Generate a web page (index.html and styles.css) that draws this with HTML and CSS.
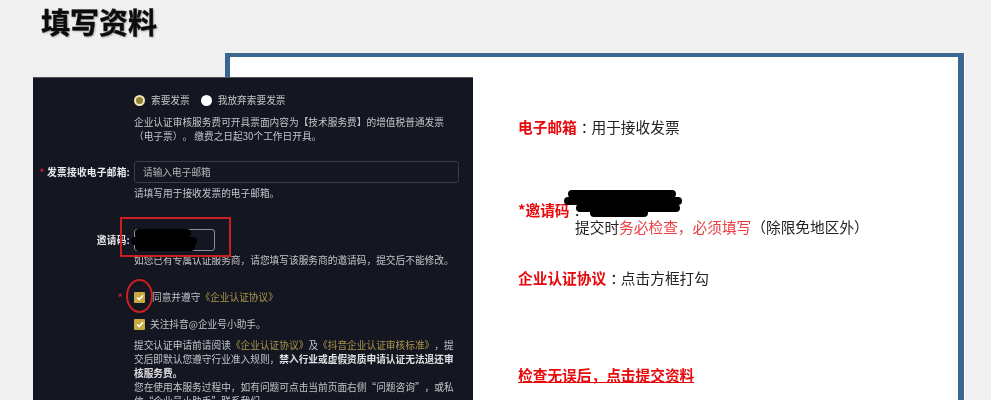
FILE: index.html
```html
<!DOCTYPE html>
<html lang="zh-CN">
<head>
<meta charset="utf-8">
<title>填写资料</title>
<link rel="stylesheet" href="styles.css">
</head>
<body>
<h1 class="title">填写资料</h1>
<main class="stage">
  <section class="frame">
    <p class="note note-email"><b class="red">电子邮箱</b><span class="colon">：</span>用于接收发票</p>
    <div class="note note-code">
      <p><b class="red">*邀请码</b><span class="colon">：</span></p>
      <p class="indent">提交时<span class="red-thin">务必检查，必须填写</span>（除限免地区外）</p>
      <svg class="scribble" width="120" height="30" viewBox="0 0 120 30"><path d="M8 4 H108 M4 11 H100 M8 11 H114 M16 18 H112 M30 23 H80" stroke="#000" stroke-width="8" stroke-linecap="round" fill="none"/></svg>
    </div>
    <p class="note note-agree"><b class="red">企业认证协议</b><span class="colon">：</span>点击方框打勾</p>
    <p class="note note-submit"><b class="red under">检查无误后，点击提交资料</b></p>
  </section>
  <section class="panel">
    <div class="row row-radio">
      <div class="field radios">
        <span class="radio on"></span><span class="opt">索要发票</span>
        <span class="radio"></span><span class="opt">我放弃索要发票</span>
      </div>
    </div>
    <div class="row row-intro">
      <p class="field text">企业认证审核服务费可开具票面内容为【技术服务费】的增值税普通发票（电子票）。 缴费之日起30个工作日开具。</p>
    </div>
    <div class="row row-mail">
      <label class="label"><i class="req">*</i> 发票接收电子邮箱:</label>
      <div class="field"><div class="input">请输入电子邮箱</div></div>
    </div>
    <div class="row row-hint">
      <p class="field text">请填写用于接收发票的电子邮箱。</p>
    </div>
    <div class="row row-code">
      <label class="label">邀请码:</label>
      <div class="field code-wrap">
        <div class="input short"></div>
        <span class="red-box"></span>
        <svg class="scribble-dark" width="70" height="24" viewBox="0 0 70 24"><path d="M8 5 H56 M4 13 H62 M8 19 H60" stroke="#000" stroke-width="8" stroke-linecap="round" fill="none"/></svg>
      </div>
    </div>
    <div class="row row-hint2">
      <p class="field text">如您已有专属认证服务商，请您填写该服务商的邀请码，提交后不能修改。</p>
    </div>
    <div class="row row-check1">
      <label class="label"><i class="req">*</i></label>
      <div class="field check-line agree">
        <span class="check"><svg width="8" height="7" viewBox="0 0 8 7"><path d="M1 3.5 L3.2 5.6 L7 1.2" stroke="#fff" stroke-width="1.6" fill="none"/></svg></span>
        <span>同意并遵守<em class="gold">《企业认证协议》</em></span>
        <span class="red-ring"></span>
      </div>
    </div>
    <div class="row row-check2">
      <div class="field check-line">
        <span class="check"><svg width="8" height="7" viewBox="0 0 8 7"><path d="M1 3.5 L3.2 5.6 L7 1.2" stroke="#fff" stroke-width="1.6" fill="none"/></svg></span>
        <span>关注抖音@企业号小助手。</span>
      </div>
    </div>
    <div class="row row-terms">
      <div class="field text">
        <p>提交认证申请前请阅读<em class="gold">《企业认证协议》</em>及<em class="gold">《抖音企业认证审核标准》</em>，提交后即默认您遵守行业准入规则，<b>禁入行业或虚假资质申请认证无法退还审核服务费。</b></p>
        <p>您在使用本服务过程中，如有问题可点击当前页面右侧“问题咨询”，或私信“企业号小助手”联系我们。</p>
      </div>
    </div>
  </section>
</main>
</body>
</html>
```
FILE: styles.css
```css
html, body {
  margin: 0;
  height: 400px;
  overflow: hidden;
  background: #f0f0f0;
  font-family: "Noto Sans CJK SC", "Liberation Sans", sans-serif;
  text-spacing-trim: space-all;
}
p { margin: 0; }
em, i { font-style: normal; }

.title {
  margin: 0;
  padding: 1px 0 0 41px;
  height: 50px;
  box-sizing: border-box;
  font-size: 29px;
  line-height: 40px;
  font-weight: 700;
  color: #0c0c0c;
  -webkit-text-stroke: .4px #0c0c0c;
  text-shadow: 1px 1px 2px rgba(0, 0, 0, .35);
  filter: blur(.3px);
}

.stage {
  display: grid;
  padding-top: 3px;
  height: 347px;
  overflow: hidden;
  filter: blur(.3px);
}
.frame, .panel { grid-area: 1 / 1; }

/* Blue-framed slide */
.frame {
  position: relative;
  margin-left: 225px;
  width: 739px;
  height: 347px;
  box-sizing: border-box;
  background: #fff;
  border: solid #396791;
  border-width: 4px 6px 0 5px;
  box-shadow: 1px 0 0 #fff;
  padding-left: 288px;
  font-size: 14.7px;
  line-height: 22px;
  color: #222;
}
.red { color: #e8080c; font-weight: 700; }
.red-thin { color: #ea3c43; }
.under { text-decoration: underline; }
.colon { display: inline-block; transform: translateX(4px); }
.note-email { padding-top: 59px; }
.note-code { position: relative; padding-top: 61px; }
.indent { margin-left: 57px; line-height: 14px; margin-top: -1px; white-space: nowrap; }
.note-agree { padding-top: 33px; }
.note-submit { padding-top: 75px; }
.scribble { position: absolute; left: 46px; top: 52px; }

/* Dark screenshot */
.panel {
  margin: 24px 0 0 33px;
  width: 440px;
  height: 323px;
  background: #141722;
  color: #c4c4c8;
  font-size: 9.7px;
  line-height: 14px;
  overflow: hidden;
  z-index: 1;
  border-top: 1px solid #555;
  box-sizing: border-box;
}
.row {
  display: grid;
  grid-template-columns: 101px 1fr;
  align-items: center;
}
.field { grid-column: 2; min-width: 0; }
.label {
  grid-column: 1;
  text-align: right;
  padding-right: 4px;
  color: #e8e8ea;
  font-weight: 700;
  font-size: 9.7px;
  letter-spacing: .25px;
  white-space: nowrap;
}
.req { color: #c8202c; }
.text { padding-right: 14px; }

.row-radio { padding-top: 15px; }
.radios { display: flex; align-items: center; }
.radio {
  width: 11px; height: 11px;
  border-radius: 50%;
  background: #fff;
  margin-right: 6px;
}
.radio.on {
  box-sizing: border-box;
  background: #8e8238;
  border: 2.5px solid #f3e9b4;
}
.opt { margin-right: 11px; }
.row-intro { padding-top: 8px; }
.row-mail { padding-top: 18px; }
.input {
  box-sizing: border-box;
  width: 325px;
  height: 22px;
  border: 1px solid #3a3e4a;
  border-radius: 3px;
  padding-left: 8px;
  line-height: 20px;
  color: #b5b5b8;
}
.input.short { width: 81px; border-color: #8e8f96; }
.row-hint { padding-top: 3px; }
.row-code { padding-top: 29px; }
.code-wrap { position: relative; }
.red-box {
  box-sizing: border-box;
  position: absolute;
  left: -14px; top: -12px;
  width: 111px; height: 40px;
  border: 2px solid #c9201f;
}
.scribble-dark { position: absolute; left: -3px; top: -1px; }
.row-hint2 { padding-top: 2px; }
.row-check1 { padding-top: 23px; }
.row-check1 .label { padding-right: 11px; box-sizing: border-box; }
.check-line { position: relative; display: flex; align-items: center; gap: 5px; }
.agree { gap: 7px; }
.check {
  display: flex;
  align-items: center;
  justify-content: center;
  width: 11px; height: 11px;
  background: #c8a93f;
  border-radius: 1px;
}
.gold { color: #ab9449; }
.red-ring {
  box-sizing: border-box;
  position: absolute;
  left: -8px; top: -11px;
  width: 27px; height: 34px;
  border: 2px solid #c9201f;
  border-radius: 50%;
}
.row-check2 { padding-top: 13px; }
.row-terms { padding-top: 7px; }
.row-terms b { color: #e0e0e2; }
```
